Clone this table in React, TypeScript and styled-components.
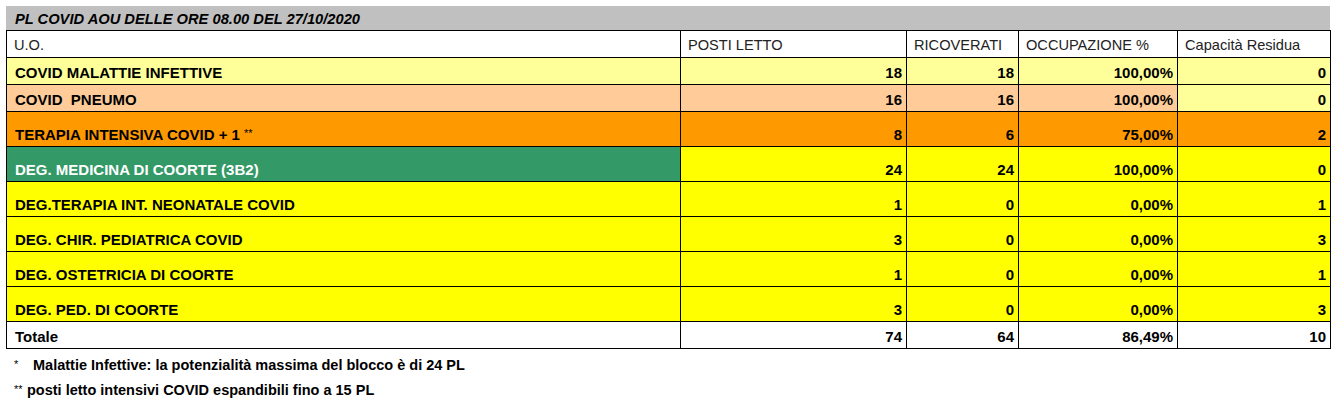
import React from 'react';
import styled, { createGlobalStyle } from 'styled-components';

const GlobalStyle = createGlobalStyle`
	body {
		margin: 0;
		background: #fff;
		font-family: 'Liberation Sans', Arial, sans-serif;
		color: #000;
	}
`;

const Page = styled.div`
	padding: 6px 7px 0 6px;
	width: 1324px;
`;

const TitleBar = styled.div`
	height: 24px;
	background: #c0c0c0;
	display: flex;
	align-items: flex-end;
	padding: 0 0 2px 9px;
	box-sizing: border-box;
	font-size: 14.7px;
	line-height: 17px;
	font-weight: bold;
	font-style: italic;
`;

const Table = styled.table`
	border-collapse: collapse;
	table-layout: fixed;
	width: 1324px;
	font-size: 15px;
`;

const Row = styled.tr<{ $h: number }>`
	height: ${(p) => p.$h}px;
`;

const Cell = styled.td<{ $bg?: string; $right?: boolean; $bold?: boolean; $light?: boolean }>`
	border: 1px solid #000;
	background: ${(p) => p.$bg || '#fff'};
	color: ${(p) => (p.$light ? '#fff' : '#000')};
	text-align: ${(p) => (p.$right ? 'right' : 'left')};
	font-weight: ${(p) => (p.$bold ? 'bold' : 'normal')};
	vertical-align: bottom;
	padding: 0 4px 3px 8px;
	white-space: nowrap;
	overflow: hidden;
	line-height: 17px;
`;

const HeadCell = styled(Cell)`
	color: #222;
	padding-left: 7px;
	font-size: 14.6px;
`;

const Star = styled.span`
	font-weight: normal;
	font-size: 11px;
	vertical-align: 3px;
`;

const Notes = styled.div`
	padding: 8px 0 0 8px;
	display: flex;
	flex-direction: column;
	gap: 7px;
	font-size: 14.5px;
	font-weight: bold;
`;

const Note = styled.div`
	display: flex;
	align-items: baseline;
	line-height: 17px;
`;

const NoteMark = styled.span<{ $w: number }>`
	width: ${(p) => p.$w}px;
	font-weight: normal;
	font-size: 11px;
	position: relative;
	top: -2px;
	flex: none;
`;

type Data = {
	name: React.ReactNode;
	posti: number;
	ric: number;
	occ: string;
	cap: number;
	bg: string;
	nameBg?: string;
	capBg?: string;
	light?: boolean;
	h: number;
};

const Y = '#ffff00';

const rows: Data[] = [
	{ name: 'COVID MALATTIE INFETTIVE', posti: 18, ric: 18, occ: '100,00%', cap: 0, bg: '#ffff99', h: 27 },
	{ name: 'COVID\u00a0 PNEUMO', posti: 16, ric: 16, occ: '100,00%', cap: 0, bg: '#ffcc99', capBg: '#ffff99', h: 27 },
	{
		name: (
			<>
				TERAPIA INTENSIVA COVID + 1 <Star>**</Star>
			</>
		),
		posti: 8,
		ric: 6,
		occ: '75,00%',
		cap: 2,
		bg: '#ff9900',
		h: 35,
	},
	{ name: 'DEG. MEDICINA DI COORTE (3B2)', posti: 24, ric: 24, occ: '100,00%', cap: 0, bg: Y, nameBg: '#339966', light: true, h: 35 },
	{ name: 'DEG.TERAPIA INT. NEONATALE COVID', posti: 1, ric: 0, occ: '0,00%', cap: 1, bg: Y, h: 35 },
	{ name: 'DEG. CHIR. PEDIATRICA COVID', posti: 3, ric: 0, occ: '0,00%', cap: 3, bg: Y, h: 35 },
	{ name: 'DEG. OSTETRICIA DI COORTE', posti: 1, ric: 0, occ: '0,00%', cap: 1, bg: Y, h: 35 },
	{ name: 'DEG. PED. DI COORTE', posti: 3, ric: 0, occ: '0,00%', cap: 3, bg: Y, h: 35 },
];

const App = () => {
	return (
		<Page>
			<GlobalStyle />
			<TitleBar>PL COVID AOU DELLE ORE 08.00 DEL 27/10/2020</TitleBar>
			<Table>
				<colgroup>
					<col style={{ width: 674 }} />
					<col style={{ width: 226 }} />
					<col style={{ width: 112 }} />
					<col style={{ width: 159 }} />
					<col style={{ width: 153 }} />
				</colgroup>
				<tbody>
					<Row $h={27}>
						<HeadCell>U.O.</HeadCell>
						<HeadCell>POSTI LETTO</HeadCell>
						<HeadCell>RICOVERATI</HeadCell>
						<HeadCell>OCCUPAZIONE %</HeadCell>
						<HeadCell>Capacità Residua</HeadCell>
					</Row>
					{rows.map((r, i) => (
						<Row key={i} $h={r.h}>
							<Cell $bg={r.nameBg || r.bg} $bold $light={r.light}>
								{r.name}
							</Cell>
							<Cell $bg={r.bg} $bold $right>
								{r.posti}
							</Cell>
							<Cell $bg={r.bg} $bold $right>
								{r.ric}
							</Cell>
							<Cell $bg={r.bg} $bold $right>
								{r.occ}
							</Cell>
							<Cell $bg={r.capBg || r.bg} $bold $right>
								{r.cap}
							</Cell>
						</Row>
					))}
					<Row $h={27}>
						<Cell $bold>Totale</Cell>
						<Cell $bold $right>74</Cell>
						<Cell $bold $right>64</Cell>
						<Cell $bold $right>86,49%</Cell>
						<Cell $bold $right>10</Cell>
					</Row>
				</tbody>
			</Table>
			<Notes>
				<Note>
					<NoteMark $w={19}>*</NoteMark>
					Malattie Infettive: la potenzialità massima del blocco è di 24 PL
				</Note>
				<Note>
					<NoteMark $w={13}>**</NoteMark>
					posti letto intensivi COVID espandibili fino a 15 PL
				</Note>
			</Notes>
		</Page>
	);
};

export default App;
